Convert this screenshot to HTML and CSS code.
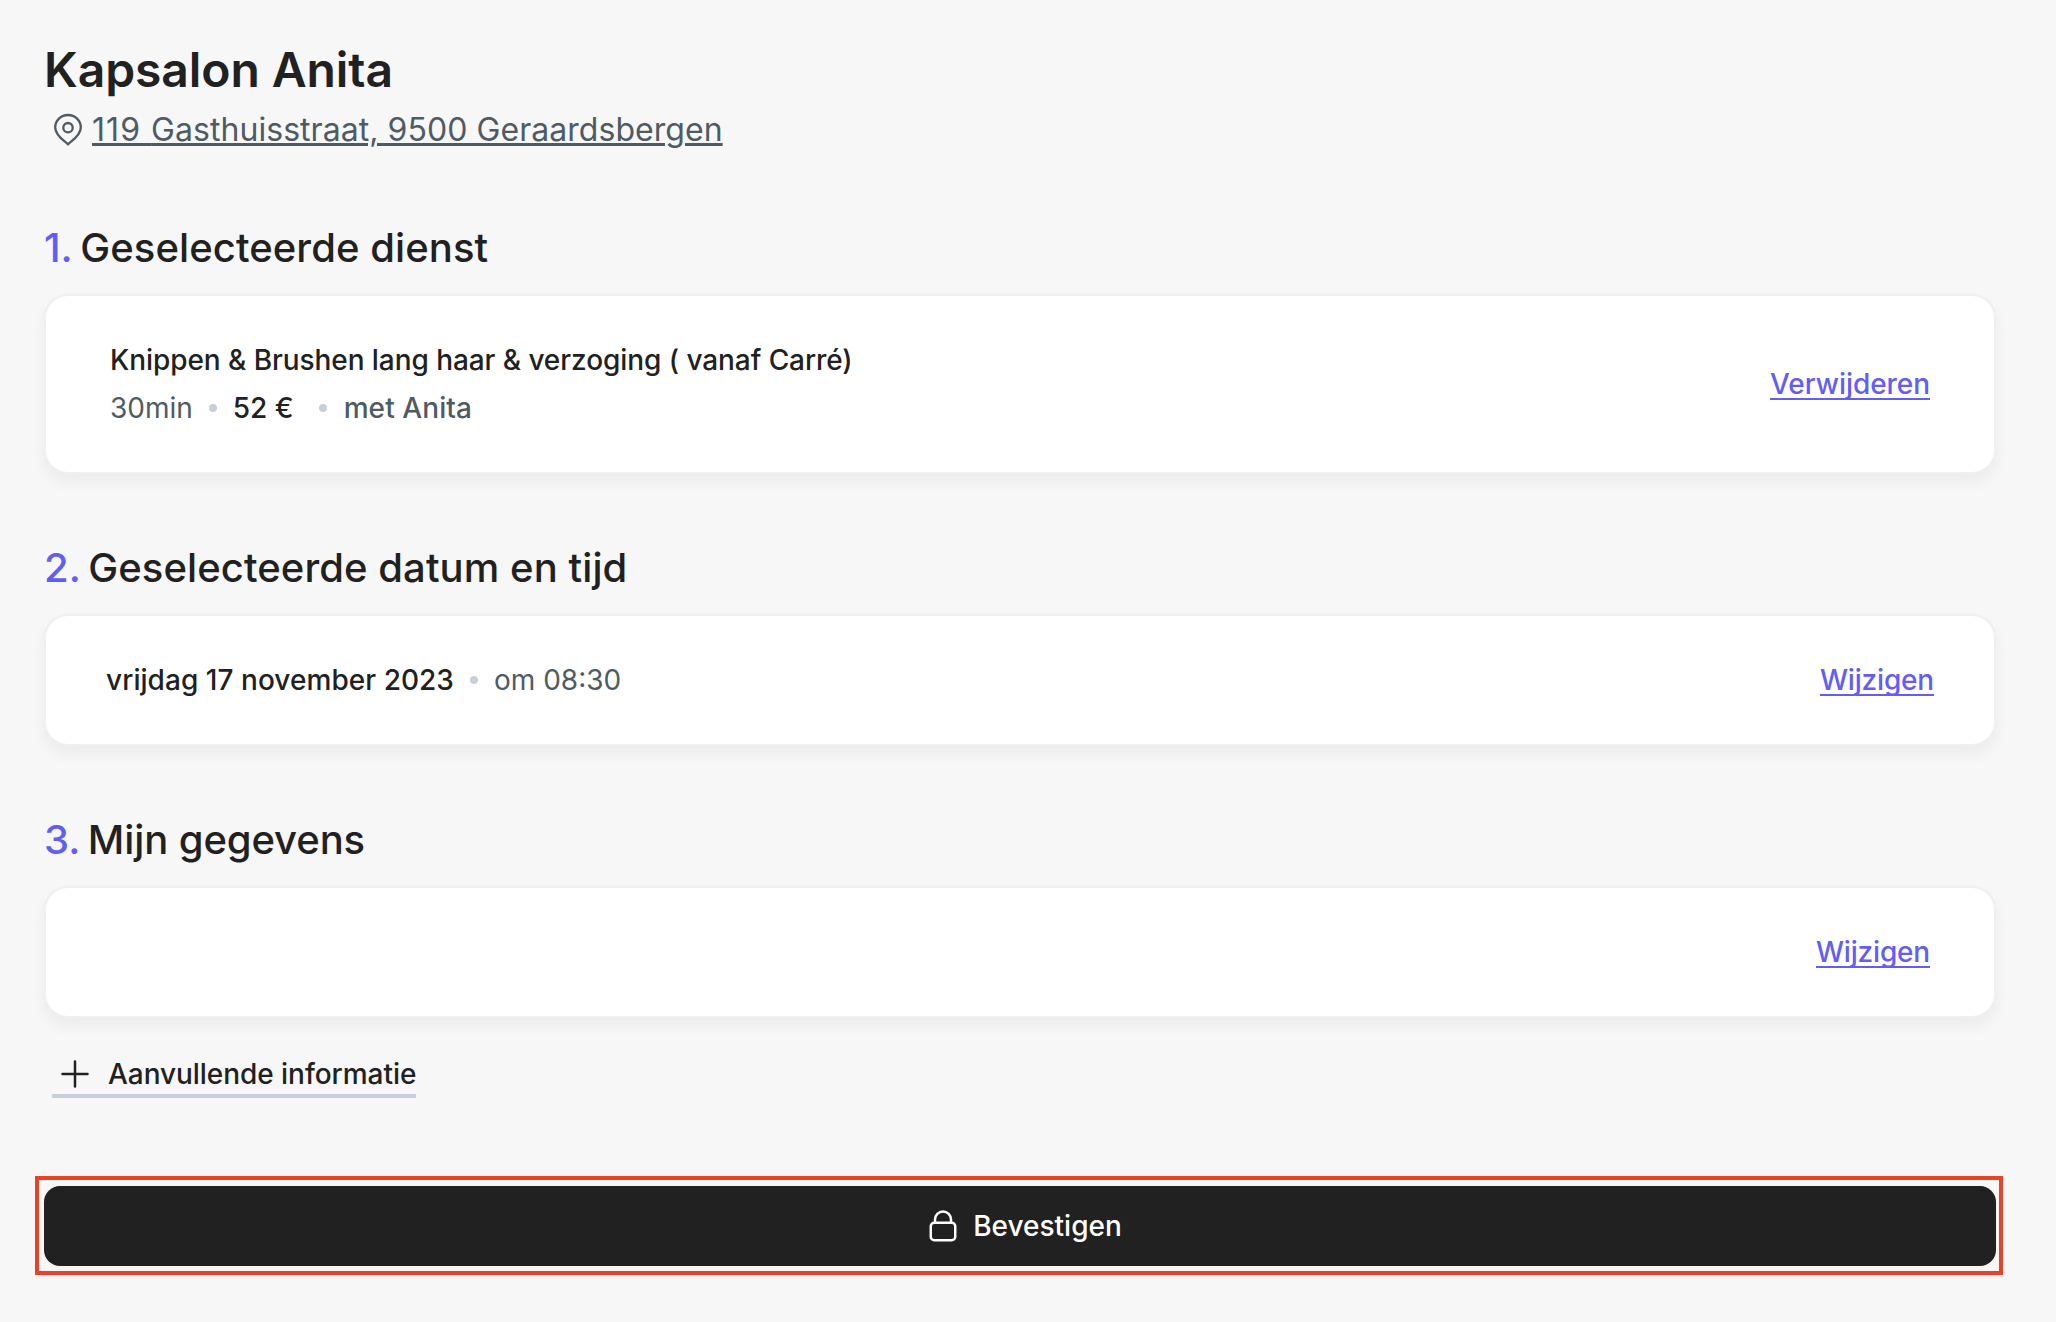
FILE: index.html
```html
<!DOCTYPE html>
<html lang="nl">
<head>
<meta charset="utf-8">
<title>Kapsalon Anita</title>
<link rel="stylesheet" href="styles.css">
</head>
<body>
<main class="page">
  <header class="salon">
    <h1 class="salon-name">Kapsalon Anita</h1>
    <div class="salon-address">
      <svg class="icon-pin" width="32" height="36" viewBox="0 0 32 36" fill="none" stroke="currentColor" stroke-width="2.3" stroke-linejoin="round"><path d="M16 32.400C13.500 29.400 3.200 23.800 3.200 15.400a12.800 12.400 0 0 1 25.600 0C28.800 23.800 18.500 29.400 16 32.400Z"/><circle cx="16" cy="15.700" r="4.700"/></svg>
      <a class="address-link"><span class="house-number">119 </span>Gasthuisstraat, 9500 Geraardsbergen</a>
    </div>
  </header>

  <section class="step">
    <h2 class="step-title"><span class="step-number">1.</span><span class="step-label">Geselecteerde dienst</span></h2>
    <div class="card">
      <div class="service">
        <div class="line"><span class="strong service-name">Knippen &amp; Brushen lang haar &amp; verzoging ( vanaf Carré)</span></div>
        <div class="line"><span class="muted">30min</span><i class="dot"></i><span class="strong price">52 €</span><i class="dot"></i><span class="muted staff">met Anita</span></div>
      </div>
      <a class="action">Verwijderen</a>
    </div>
  </section>

  <section class="step">
    <h2 class="step-title"><span class="step-number">2.</span><span class="step-label">Geselecteerde datum en tijd</span></h2>
    <div class="card card-date">
      <div class="line"><span class="strong date">vrijdag 17 november 2023</span><i class="dot"></i><span class="muted">om 08:30</span></div>
      <a class="action action-edit">Wijzigen</a>
    </div>
  </section>

  <section class="step">
    <h2 class="step-title"><span class="step-number">3.</span><span class="step-label step-label-details">Mijn gegevens</span></h2>
    <div class="card">
      <div class="line"></div>
      <a class="action action-edit">Wijzigen</a>
    </div>
  </section>

  <div class="extra">
    <svg class="icon-plus" width="28" height="28" viewBox="0 0 28 28" fill="none" stroke="currentColor" stroke-width="2.500" stroke-linecap="round"><path d="M14 1.500v25M1.500 14h25"/></svg>
    <span class="extra-label">Aanvullende informatie</span>
  </div>

  <div class="highlight">
    <button class="confirm">
      <svg class="icon-lock" width="28" height="32" viewBox="0 0 28 32" fill="none" stroke="currentColor" stroke-width="2.500"><rect x="1.750" y="12.750" width="24.500" height="17.500" rx="3.500"/><path d="M6 12.500V9.500a8 8 0 0 1 16 0v3"/></svg>
      <span class="confirm-label">Bevestigen</span>
    </button>
  </div>
</main>
</body>
</html>
```
FILE: styles.css
```css
* { box-sizing: border-box; }

body {
  margin: 0;
  background: #f7f7f7;
  color: #212121;
  font-family: Inter, "Liberation Sans", sans-serif;
  font-size: 28px;
  line-height: 48px;
}

.page {
  width: 1996px;
  min-height: 1322px;
  padding: 40px 0 0 44px;
}

h1, h2 { margin: 0; }

.salon-name {
  font-size: 48px;
  font-weight: 600;
  letter-spacing: -0.08px;
  line-height: 60px;
}

.salon-address {
  display: flex;
  align-items: center;
  gap: 8px;
  height: 48px;
  margin-top: 6px;
  padding-left: 8px;
  color: #4f5b64;
  font-size: 32px;
  letter-spacing: 0.05px;
}

.address-link {
  text-decoration: underline;
  text-decoration-thickness: 3px;
  text-underline-offset: 2px;
}

.house-number { letter-spacing: 1.05px; }

.step { margin-top: 70px; }

.step-title {
  display: flex;
  gap: 7.5px;
  margin-bottom: 22px;
  font-size: 40px;
  font-weight: 500;
  line-height: 48px;
}

.step-number { color: #625df5; }

.step-label { letter-spacing: 0.08px; }

.step-label-details { letter-spacing: -0.1px; }

.card {
  display: flex;
  align-items: center;
  justify-content: space-between;
  padding: 40px 64px;
  border: 2px solid #f0f0f0;
  border-radius: 24px;
  background: #fff;
  box-shadow: 0 8px 16px rgba(0, 0, 0, 0.05);
}

.card-date { padding: 40px 60px; }

.line {
  display: flex;
  align-items: center;
  height: 48px;
}

.strong { font-weight: 500; }

.service-name { letter-spacing: -0.065px; }

.date { letter-spacing: 0.05px; }

.muted { color: #4f5b64; }

.staff {
  padding-left: 1px;
  font-weight: 500;
  letter-spacing: 0.08px;
}

.price { padding-right: 9px; }

.dot {
  width: 8px;
  height: 8px;
  margin: 0 16px;
  border-radius: 50%;
  background: #c7d0d8;
}

.action {
  margin-top: 2px;
  border-bottom: 2px solid #625df5;
  color: #625df5;
  font-weight: 500;
  letter-spacing: -0.05px;
  line-height: 28px;
}

.action-edit { letter-spacing: -0.18px; }

.extra {
  display: flex;
  align-items: center;
  width: 364px;
  height: 48px;
  margin: 32px 0 0 8px;
  padding: 4px 0 0 9px;
  gap: 19px;
  border-bottom: 4px solid #c7d0d8;
  font-weight: 500;
  letter-spacing: -0.05px;
  white-space: nowrap;
}

.icon-plus, .icon-pin, .icon-lock { flex: none; }

.highlight {
  width: 1968px;
  margin: 78px 0 0 -9px;
  padding: 6px 3px 5px 5px;
  border: 4px solid #ea4228;
}

.confirm {
  display: flex;
  align-items: center;
  justify-content: center;
  gap: 16.5px;
  width: 1952px;
  height: 80px;
  padding: 0 0 0 10.5px;
  border: 0;
  border-radius: 16px;
  background: #212121;
  color: #fff;
  font: 500 28px/48px Inter, "Liberation Sans", sans-serif;
}
```
